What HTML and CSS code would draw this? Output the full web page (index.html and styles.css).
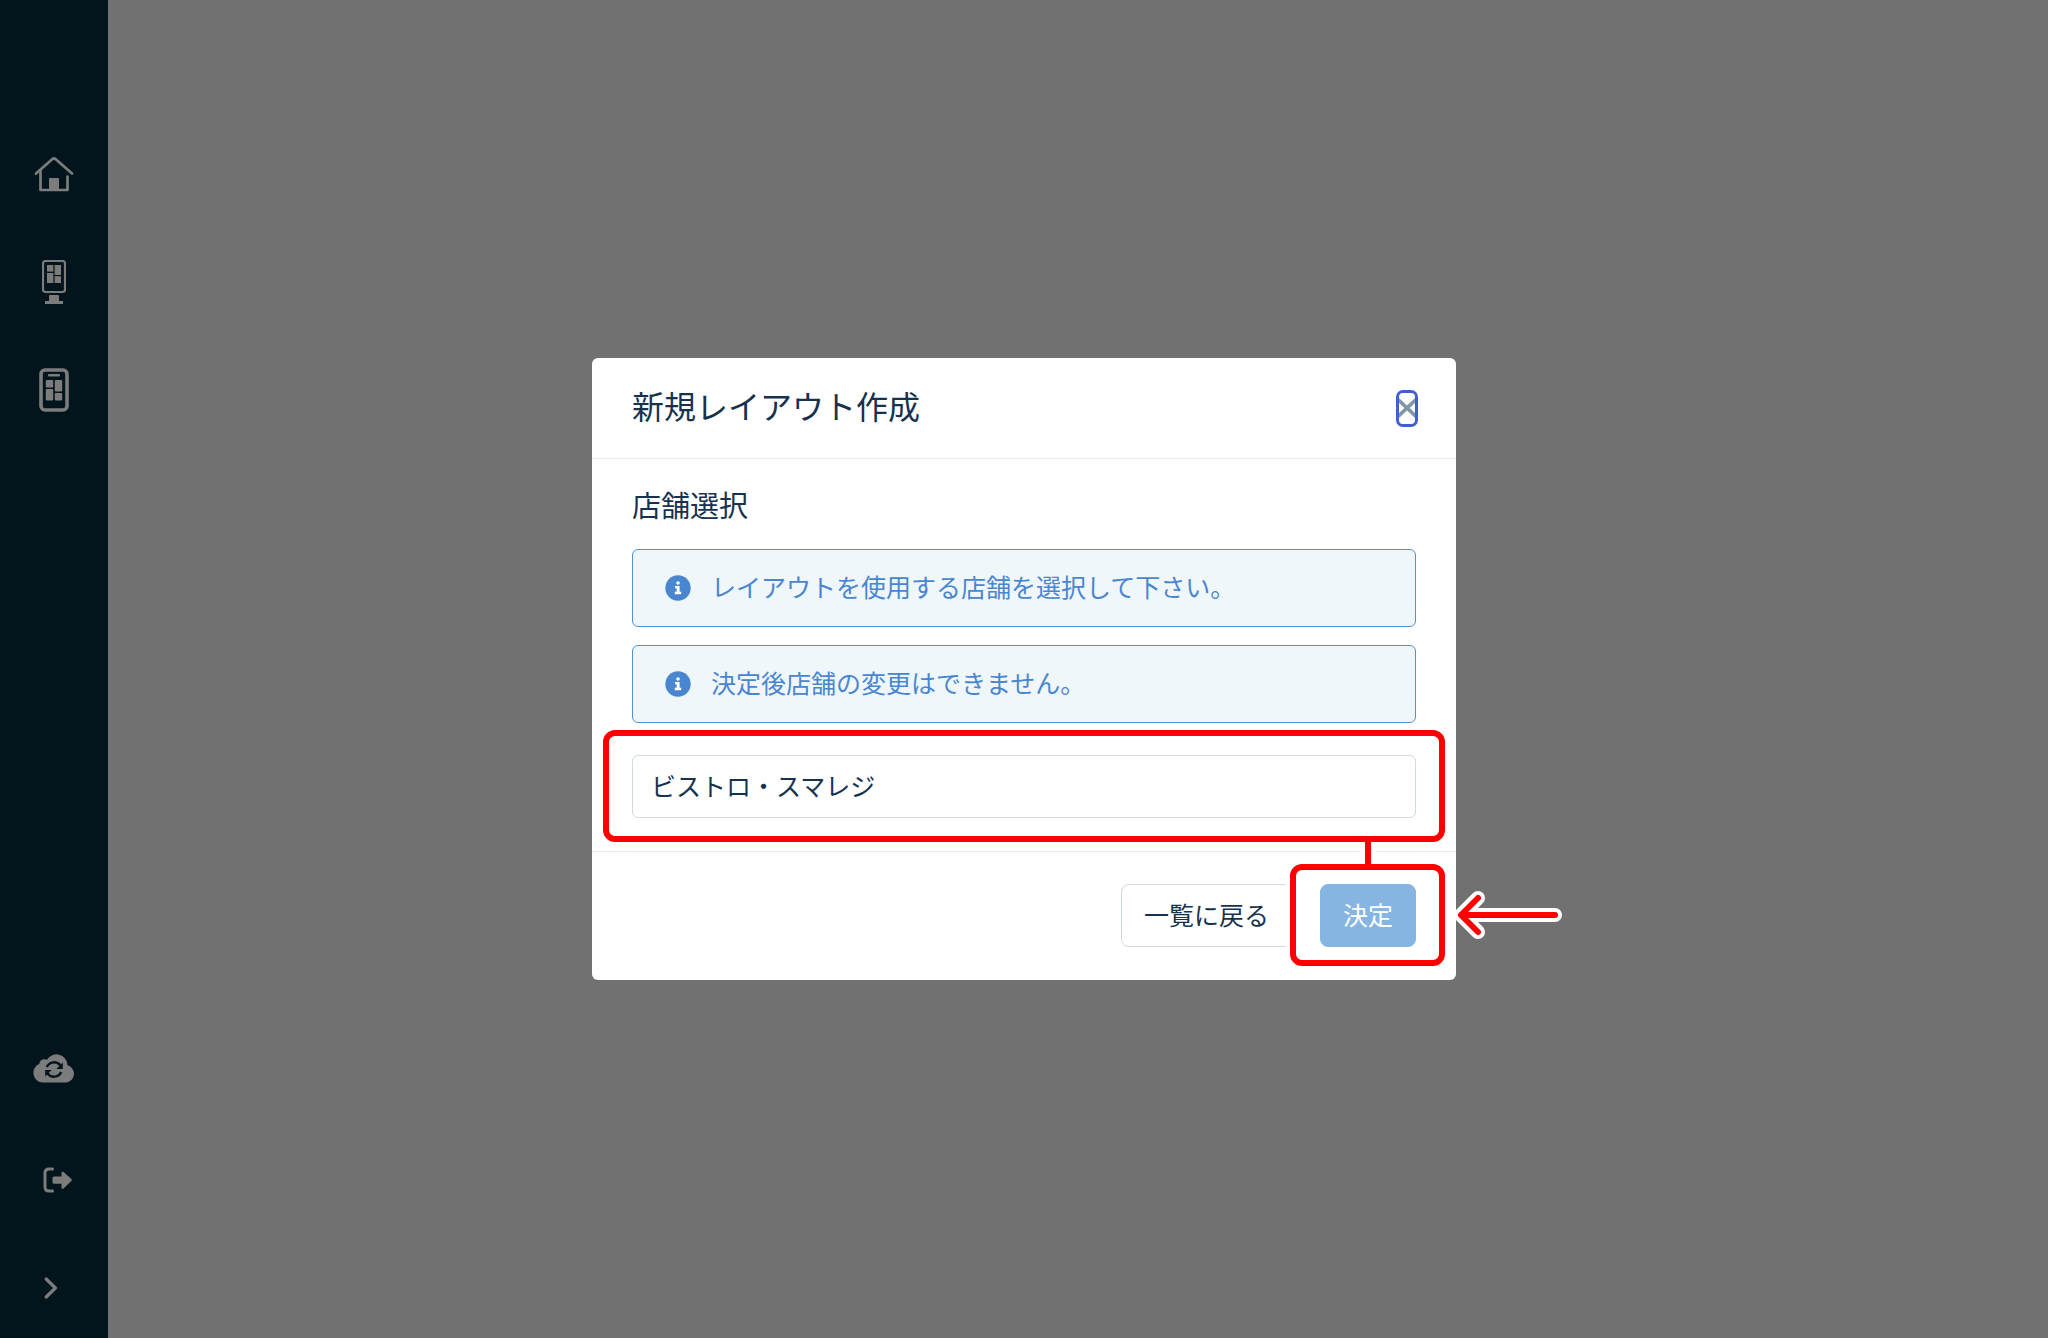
FILE: index.html
```html
<!DOCTYPE html>
<html lang="ja">
<head>
  <meta charset="UTF-8">
  <meta name="viewport" content="width=device-width, initial-scale=1">
  <title>新規レイアウト作成</title>
  <link rel="stylesheet" href="styles.css">
</head>
<body>

  <nav class="sidebar">
    <div class="nav-group">
      <a href="#" class="nav-item" aria-label="ホーム">
        <svg width="40" height="36" viewBox="0 0 40 36" fill="none" stroke="currentColor" stroke-width="2.7" stroke-linecap="round" stroke-linejoin="round">
          <path d="M2 17.5 L18.2 3.2 Q20 1.8 21.8 3.2 L38 17.5"/>
          <path d="M6.5 14.5 V34 H33.5 V20.5"/>
          <path d="M15 34 V23 Q15 22 16 22 H24 Q25 22 25 23 V34 Z" fill="currentColor" stroke="none"/>
        </svg>
      </a>
      <a href="#" class="nav-item" aria-label="キオスク">
        <svg width="24" height="44" viewBox="0 0 24 44" fill="currentColor">
          <rect x="1" y="1" width="22" height="31" rx="2.5" fill="none" stroke="currentColor" stroke-width="2.2"/>
          <rect x="5" y="5" width="6.4" height="6.6"/>
          <rect x="12.6" y="5" width="6.4" height="10"/>
          <rect x="5" y="13" width="6.4" height="10"/>
          <rect x="12.6" y="16.2" width="6.4" height="6.8"/>
          <path d="M7 41 V36 Q7 35 8 35 H16 Q17 35 17 36 V41 H21 V44 H3 V41 Z"/>
        </svg>
      </a>
      <a href="#" class="nav-item" aria-label="モバイル">
        <svg width="30" height="44" viewBox="0 0 30 44" fill="currentColor">
          <rect x="2" y="2" width="26" height="40" rx="4" fill="none" stroke="currentColor" stroke-width="3.6"/>
          <rect x="9" y="6" width="12" height="2.6" rx="1"/>
          <rect x="6.8" y="12" width="7.4" height="7.6" rx="1"/>
          <rect x="15.8" y="12" width="7.4" height="11.6" rx="1"/>
          <rect x="6.8" y="21" width="7.4" height="11.6" rx="1"/>
          <rect x="15.8" y="25" width="7.4" height="7.6" rx="1"/>
        </svg>
      </a>
    </div>

    <div class="nav-group">
      <a href="#" class="nav-item" aria-label="同期">
        <svg width="42" height="30" viewBox="0 0 42 30">
          <path fill="currentColor" d="M9.8 29.5 A9.7 9.7 0 0 1 6.5 10.8 C6 7.5 10 5 14 6.8 A11 11 0 0 1 34.5 12.3 A8.8 8.8 0 0 1 33.5 29.5 Z"/>
          <g class="cutout">
            <path d="M13.8 14 A8 8 0 0 1 27.5 12.5" fill="none" stroke-width="2.4"/>
            <path d="M28.2 19 A8 8 0 0 1 14.5 20.5" fill="none" stroke-width="2.4"/>
            <path d="M29.8 9.5 V16 H23.4 Z" stroke="none"/>
            <path d="M12.2 23.5 V17 H18.6 Z" stroke="none"/>
          </g>
        </svg>
      </a>
      <a href="#" class="nav-item nav-logout" aria-label="ログアウト">
        <svg width="30" height="26" viewBox="0 0 30 26" fill="none" stroke="currentColor" stroke-width="3" stroke-linecap="round">
          <path d="M9.5 2 H6 Q2 2 2 6 V20 Q2 24 6 24 H9.5"/>
          <path d="M11 9.5 H18.5 V6 Q18.5 3.6 20.5 5 L28.4 12 Q29.4 13 28.4 14 L20.5 21.4 Q18.5 22.7 18.5 20.5 V16.8 H11 Q9.5 16.8 9.5 15.3 V11 Q9.5 9.5 11 9.5 Z" fill="currentColor" stroke="none"/>
        </svg>
      </a>
      <a href="#" class="nav-item nav-expand" aria-label="メニューを開く">
        <svg width="14" height="22" viewBox="0 0 14 22" fill="none" stroke="currentColor" stroke-width="3.2" stroke-linecap="round" stroke-linejoin="round">
          <path d="M2.2 2 L11.4 11 L2.2 20"/>
        </svg>
      </a>
    </div>
  </nav>

  <main class="overlay">
    <form class="modal" role="dialog" aria-labelledby="modalTitle">
      <header class="modal-header">
        <h1 id="modalTitle" class="modal-title">新規レイアウト作成</h1>
        <button type="button" class="close" aria-label="閉じる">
          <svg width="16" height="20" viewBox="0 0 16 20" fill="none" stroke="currentColor" stroke-width="3.6">
            <path d="M-1 1.5 L17 18.5 M17 1.5 L-1 18.5"/>
          </svg>
        </button>
      </header>

      <div class="modal-body">
        <label for="store" class="field-label">店舗選択</label>
        <div class="alerts">
          <div class="alert">
            <svg class="alert-icon" width="26" height="26" viewBox="0 0 26 26">
              <circle cx="13" cy="13" r="12.7" fill="currentColor"/>
              <circle cx="13" cy="8" r="1.8" fill="#fff"/>
              <path fill="#fff" d="M10 11 H14.6 V16.8 H16.2 V19.2 H9.8 V16.8 H11.6 V13.3 H10 Z"/>
            </svg>
            <span>レイアウトを使用する店舗を選択して下さい。</span>
          </div>
          <div class="alert">
            <svg class="alert-icon" width="26" height="26" viewBox="0 0 26 26">
              <circle cx="13" cy="13" r="12.7" fill="currentColor"/>
              <circle cx="13" cy="8" r="1.8" fill="#fff"/>
              <path fill="#fff" d="M10 11 H14.6 V16.8 H16.2 V19.2 H9.8 V16.8 H11.6 V13.3 H10 Z"/>
            </svg>
            <span>決定後店舗の変更はできません。</span>
          </div>
        </div>
        <div class="field">
          <select id="store" class="select">
            <option>ビストロ・スマレジ</option>
          </select>
          <span class="mark mark-field"></span>
        </div>
      </div>

      <footer class="modal-footer">
        <button type="button" class="btn btn-back">一覧に戻る</button>
        <div class="submit">
          <button type="submit" class="btn btn-primary">決定</button>
          <span class="mark mark-submit"></span>
          <span class="mark-line"></span>
          <svg class="mark-arrow" width="112" height="50" viewBox="0 0 112 50" fill="none" stroke-linecap="round" stroke-linejoin="round">
            <path d="M104 25 H10 M27 8 L10 25 L27 42" stroke="#fff" stroke-width="14"/>
            <path d="M104 25 H10 M27 8 L10 25 L27 42" stroke="#f00" stroke-width="6"/>
          </svg>
        </div>
      </footer>
    </form>
  </main>

</body>
</html>
```
FILE: styles.css
```css
* {
  box-sizing: border-box;
}

body {
  margin: 0;
  display: flex;
  min-height: 100vh;
  background-color: #717171;
  color: #17324f;
  font-family: "Liberation Sans", "Noto Sans CJK JP", sans-serif;
  font-size: 25px;
  line-height: 36px;
}

button, select {
  font: inherit;
  color: inherit;
}

/* sidebar */
.sidebar {
  display: flex;
  flex-direction: column;
  justify-content: space-between;
  width: 108px;
  padding-top: 120px;
  background-color: #03151c;
}

.nav-item {
  display: flex;
  align-items: center;
  justify-content: center;
  height: 108px;
  border-bottom: 1px solid #041219;
  color: #7c7c7c;
}

.nav-logout {
  padding: 8px 0 0 8px;
}

.nav-expand {
  padding: 8px 6px 0 0;
}

.cutout {
  fill: #03151c;
  stroke: #03151c;
}

/* modal */
.overlay {
  flex: 1;
  display: flex;
  align-items: center;
  justify-content: center;
  padding-right: 108px;
}

.modal {
  width: 100%;
  max-width: 864px;
  border-radius: 6px;
  background-color: #fff;
}

.modal-header {
  display: flex;
  align-items: center;
  justify-content: space-between;
  padding: 26px 38px 26px 40px;
  border-bottom: 1px solid #e6edee;
}

.modal-title {
  margin: 0;
  font-size: 32px;
  font-weight: 400;
  line-height: 48px;
}

.close {
  display: flex;
  align-items: center;
  justify-content: center;
  width: 22px;
  height: 37px;
  padding: 0;
  border: 3px solid #405fd0;
  border-radius: 7px;
  background: none;
  color: #7f98a6;
}

.modal-body {
  padding: 28px 40px 33px;
}

.field-label {
  display: block;
  margin-bottom: 22px;
  font-size: 29px;
  line-height: 40px;
}

.alerts {
  display: grid;
  gap: 18px;
  margin-bottom: 32px;
}

.alert {
  display: flex;
  align-items: center;
  gap: 20px;
  padding: 20px 32px;
  border: 1px solid #5294d6;
  border-radius: 6px;
  background-color: #eff7fb;
  color: #4a86d0;
}

.alert-icon {
  flex-shrink: 0;
}

.field {
  position: relative;
}

.select {
  display: block;
  width: 100%;
  height: 63px;
  padding: 0 18px;
  border: 1px solid #cfd9de;
  border-radius: 6px;
  background-color: #fff;
  appearance: none;
}

.modal-footer {
  display: flex;
  justify-content: flex-end;
  gap: 28px;
  padding: 32px 40px 33px;
  border-top: 1px solid #e6edee;
}

.btn {
  height: 63px;
  padding: 0 22px;
  border: 1px solid #cfd9de;
  border-radius: 8px;
  background-color: #fff;
}

.btn-primary {
  border-color: #86b5e1;
  background-color: #86b5e1;
  color: #fff;
}

.submit {
  position: relative;
}

/* step highlights drawn over the form */
.mark {
  position: absolute;
  border: 6px solid #f00;
  border-radius: 12px;
  pointer-events: none;
}

.mark-field {
  inset: -25px -29px -24px;
}

.mark-submit {
  inset: -20px -29px -19px -30px;
  box-shadow: 0 0 0 4px #fff;
}

.mark-line {
  position: absolute;
  bottom: 100%;
  left: 50%;
  width: 14px;
  height: 22px;
  margin: 0 0 20px -7px;
  border: solid #fff;
  border-width: 0 4px;
  background-color: #f00;
}

.mark-arrow {
  position: absolute;
  top: 6px;
  left: 100%;
  margin-left: 35px;
}
```
